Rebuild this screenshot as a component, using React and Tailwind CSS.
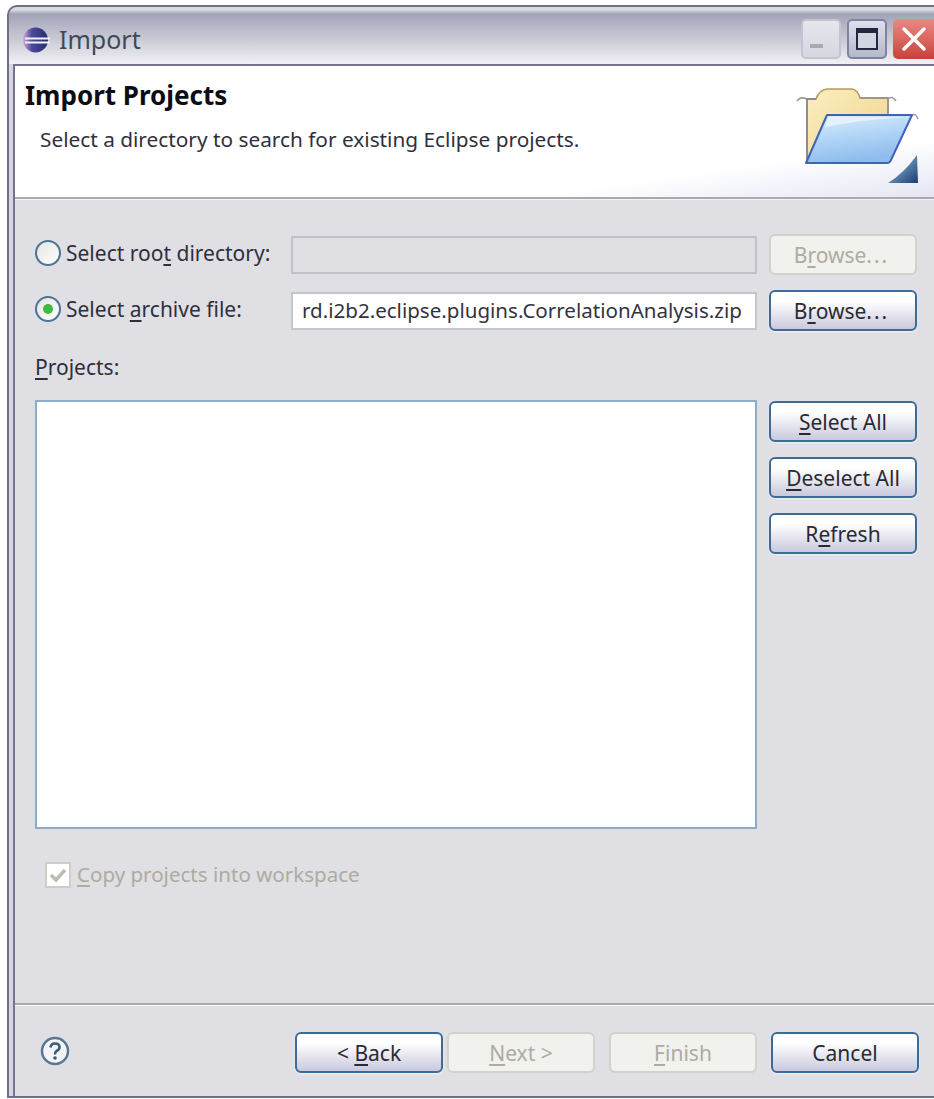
import React from "react";

const FONT = "font-['Noto_Sans','Open_Sans',sans-serif]";

// A single mnemonic letter, underlined the way Windows dialogs mark access keys.
function Key({ children }) {
  return <span className="underline decoration-[2px] underline-offset-[3px]">{children}</span>;
}

function PushButton({ children, disabled, className = "" }) {
  const look = disabled
    ? "border-[#d2d2cd] bg-[#f1f1ed] text-[#aeaba3]"
    : "border-[#3b6b99] bg-gradient-to-b from-[#ffffff] from-[25%] to-[#c9c9dd] text-[#2a2a33] shadow-[0_1px_2px_#f4f4f6]";
  return (
    <div
      className={`flex h-[41px] w-[148px] shrink-0 items-center justify-center rounded-[6px] border-2 text-[21px] leading-none ${look} ${className}`}
    >
      <span className="translate-y-[1px]">{children}</span>
    </div>
  );
}

function Radio({ checked }) {
  return (
    <div className="flex h-[26px] w-[26px] shrink-0 -translate-y-[2px] items-center justify-center rounded-full border-2 border-[#4d7396] bg-gradient-to-br from-[#e4e4e0] to-[#ffffff]">
      {checked && <div className="h-[10px] w-[10px] rounded-full bg-[#3fb93f]" />}
    </div>
  );
}

function EclipseIcon() {
  return (
    <svg width="30" height="26" viewBox="0 0 30 26">
      <defs>
        <linearGradient id="eclipseBody" x1="0" y1="0" x2="1" y2="0">
          <stop offset="0" stopColor="#d6a9d6" />
          <stop offset="0.35" stopColor="#4a4a9c" />
          <stop offset="1" stopColor="#2a2a6e" />
        </linearGradient>
      </defs>
      <circle cx="14.5" cy="13" r="12.5" fill="url(#eclipseBody)" />
      <rect x="4" y="10.5" width="25" height="2" fill="#f2f2fa" />
      <rect x="4" y="14.5" width="25" height="2" fill="#f2f2fa" />
    </svg>
  );
}

function FolderIcon() {
  return (
    <svg width="126" height="100" viewBox="0 0 126 100">
      <defs>
        <linearGradient id="folderBack" x1="0" y1="0" x2="1" y2="1">
          <stop offset="0" stopColor="#fbeec4" />
          <stop offset="1" stopColor="#f0d486" />
        </linearGradient>
        <linearGradient id="folderFront" x1="0" y1="0" x2="0.3" y2="1">
          <stop offset="0" stopColor="#dff0fd" />
          <stop offset="0.5" stopColor="#b2d6f6" />
          <stop offset="1" stopColor="#8fbcee" />
        </linearGradient>
        <linearGradient id="folderCorner" x1="0" y1="0" x2="1" y2="1">
          <stop offset="0" stopColor="#a8c8e8" />
          <stop offset="1" stopColor="#163e72" />
        </linearGradient>
      </defs>
      <path d="M1 14 Q4 9 11 12" fill="none" stroke="#9c9ca4" strokeWidth="1.5" />
      <path d="M92 12 Q96 8 100 14" fill="none" stroke="#9c9ca4" strokeWidth="1.5" />
      <path d="M116 28 Q120 26 122 32" fill="none" stroke="#9c9ca4" strokeWidth="1.5" />
      <path
        d="M11 74 L11 12 L20 12 Q23 3 31 2 L56 2 Q62 3 64 11 L92 11 L92 32 L40 32 Z"
        fill="url(#folderBack)"
        stroke="#b59a5c"
        strokeWidth="1.5"
      />
      <path d="M11 74 L11 12 L20 12" fill="none" stroke="#7f7f9a" strokeWidth="1.5" />
      <path d="M64 11 L92 11 L92 30" fill="none" stroke="#8f8f96" strokeWidth="1.5" />
      <path
        d="M10 76 L31 28 L116 28 L95 73 Q94 76 91 76 Z"
        fill="url(#folderFront)"
        stroke="#3f63bd"
        strokeWidth="2"
        strokeLinejoin="round"
      />
      <path d="M29 40 L32 30 L113 30 Q70 32 29 40" fill="#eaf5fe" opacity="0.8" />
      <path d="M121 68 L122 96 L92 96 Q108 86 121 68 Z" fill="url(#folderCorner)" />
    </svg>
  );
}

export default function App() {
  return (
    <div className={`h-[1099px] w-[934px] overflow-hidden bg-white pl-[7px] pt-[5px] ${FONT}`}>
      <div className="flex h-[1093px] w-[927px] flex-col">
        {/* Title bar */}
        <div className="relative h-[59px] shrink-0 rounded-tl-[10px] border-l-2 border-t-2 border-[#6f6f88] bg-gradient-to-b from-[#d9d9e3] from-[5%] via-[#a3a3b8] via-[12%] to-[#f1f1f5]">
          <div className="flex h-full items-center pl-[12px] pt-[8px]">
            <EclipseIcon />
            <span className="ml-[8px] text-[25px] leading-none text-[#3c4a58]">Import</span>
          </div>
          <div className="absolute right-0 top-[12px] flex gap-[6px]">
            <div className="flex h-[40px] w-[40px] items-end justify-center rounded-[5px] border-2 border-[#c2c4d2] bg-gradient-to-b from-[#e6e6ec] to-[#d6d6e0] pb-[9px]">
              <div className="mr-[10px] h-[4px] w-[13px] bg-[#a9a9b6]" />
            </div>
            <div className="flex h-[40px] w-[40px] items-center justify-center rounded-[5px] border-2 border-[#7c84a2] bg-gradient-to-b from-[#dfe0ea] to-[#b6b8cc]">
              <div className="h-[22px] w-[22px] border-2 border-t-[5px] border-[#22263e] bg-[#d3d4e2]" />
            </div>
            <div className="flex h-[40px] w-[41px] items-center justify-center rounded-l-[5px] bg-gradient-to-b from-[#e98a84] to-[#c8403a]">
              <svg width="28" height="28" viewBox="0 0 28 28">
                <path d="M4 4 L24 24 M24 4 L4 24" stroke="#ffffff" strokeWidth="3.5" strokeLinecap="round" />
              </svg>
            </div>
          </div>
        </div>

        {/* Frame holding the wizard page */}
        <div className="flex min-h-0 flex-1 flex-col border-b-2 border-l-2 border-[#6f6f88] bg-[#d6d6e2] pl-[4px]">
          <div className="flex min-h-0 flex-1 flex-col border-l-2 border-t-2 border-[#74748c]">
            {/* Wizard banner */}
            <div className="relative h-[133px] shrink-0 overflow-hidden border-b-2 border-[#a9a9ae] bg-gradient-to-br from-[#ffffff] from-[78%] to-[#e4e6f4] pl-[10px] pt-[13px]">
              <div className="text-[26px] font-bold leading-[32px] text-[#0c0c14]">Import Projects</div>
              <div className="ml-[15px] mt-[15px] text-[20.8px] leading-[26px] text-[#30303c]">
                Select a directory to search for existing Eclipse projects.
              </div>
              <div className="absolute left-[781px] top-[21px]">
                <FolderIcon />
              </div>
            </div>

            {/* Wizard page */}
            <div className="flex min-h-0 flex-1 flex-col border-t border-[#f4f4f6] bg-[#dfdfe4] pl-[20px] pt-[34px] text-[21px] text-[#2f2f3a]">
              <div className="flex h-[41px] items-center">
                <div className="flex w-[256px] items-center gap-[5px]">
                  <Radio />
                  <span className="-translate-y-[1px]">Select roo<Key>t</Key> directory:</span>
                </div>
                <div className="h-[38px] w-[466px] border-2 border-[#bfc3c9] bg-[#dfdfe4]" />
                <PushButton disabled className="ml-[12px]">
                  B<Key>r</Key>owse<span className="pr-[3px] tracking-[2px]">...</span>
                </PushButton>
              </div>

              <div className="mt-[15px] flex h-[41px] items-center">
                <div className="flex w-[256px] items-center gap-[5px]">
                  <Radio checked />
                  <span className="-translate-y-[1px]">Select <Key>a</Key>rchive file:</span>
                </div>
                <div className="flex h-[38px] w-[466px] items-center whitespace-nowrap border-2 border-[#c3c7cc] bg-white pl-[9px] text-[20.55px] text-[#33333e]">
                  rd.i2b2.eclipse.plugins.CorrelationAnalysis.zip
                </div>
                <PushButton className="ml-[12px]">
                  B<Key>r</Key>owse<span className="pr-[3px] tracking-[2px]">...</span>
                </PushButton>
              </div>

              <div className="mt-[23px] h-[26px] leading-[26px]"><Key>P</Key>rojects:</div>

              <div className="mt-[20px] flex">
                <div className="h-[429px] w-[722px] border-2 border-[#8fadc6] bg-white" />
                <div className="ml-[12px] mt-[1px] flex flex-col gap-[15px]">
                  <PushButton><Key>S</Key>elect All</PushButton>
                  <PushButton><Key>D</Key>eselect All</PushButton>
                  <PushButton>R<Key>e</Key>fresh</PushButton>
                </div>
              </div>

              <div className="ml-[10px] mt-[33px] flex h-[26px] items-center gap-[6px] text-[20.55px] text-[#aeaba3]">
                <div className="flex h-[26px] w-[26px] items-center justify-center border-2 border-[#cfcdc6] bg-white">
                  <svg width="18" height="16" viewBox="0 0 18 16">
                    <path d="M2 8 L7 13 L16 3" fill="none" stroke="#bdbbb4" strokeWidth="3.5" />
                  </svg>
                </div>
                <span className="-translate-y-[1px]"><Key>C</Key>opy projects into workspace</span>
              </div>
            </div>

            {/* Button strip */}
            <div className="shrink-0 border-t-2 border-[#a9a9ae] bg-[#dfdfe4]">
              <div className="flex h-[91px] items-start border-t border-[#f8f8fa] pl-[25px] pt-[26px] text-[21px]">
                <svg className="mt-[4px]" width="30" height="30" viewBox="0 0 30 30">
                  <circle cx="15" cy="15" r="13" fill="#f2f4f8" stroke="#5a7893" strokeWidth="2.5" />
                  <path d="M10.5 11.5 Q11 7.5 15 7.5 Q19.5 7.5 19.5 11.2 Q19.5 13.5 16.5 15 Q15 16 15 18.5" fill="none" stroke="#3f5a75" strokeWidth="2.6" />
                  <circle cx="15" cy="22" r="1.8" fill="#3f5a75" />
                </svg>
                <PushButton className="ml-[225px]">&lt; <Key>B</Key>ack</PushButton>
                <PushButton disabled className="ml-[4px]"><Key>N</Key>ext &gt;</PushButton>
                <PushButton disabled className="ml-[14px]"><Key>F</Key>inish</PushButton>
                <PushButton className="ml-[14px]">Cancel</PushButton>
              </div>
            </div>
          </div>
        </div>
      </div>
    </div>
  );
}
